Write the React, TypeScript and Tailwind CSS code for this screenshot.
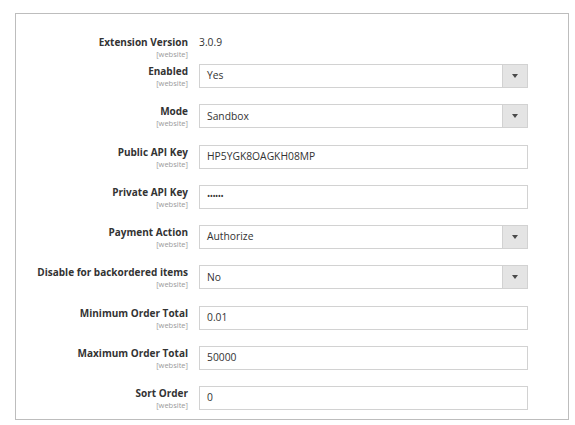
import React from 'react';

type Field = {
  label: string;
  value: string;
  kind: 'select' | 'text';
};

const fields: Field[] = [
  { label: 'Enabled', value: 'Yes', kind: 'select' },
  { label: 'Mode', value: 'Sandbox', kind: 'select' },
  { label: 'Public API Key', value: 'HP5YGK8OAGKH08MP', kind: 'text' },
  { label: 'Private API Key', value: '••••••', kind: 'text' },
  { label: 'Payment Action', value: 'Authorize', kind: 'select' },
  { label: 'Disable for backordered items', value: 'No', kind: 'select' },
  { label: 'Minimum Order Total', value: '0.01', kind: 'text' },
  { label: 'Maximum Order Total', value: '50000', kind: 'text' },
  { label: 'Sort Order', value: '0', kind: 'text' },
];

function Label({ text }: { text: string }) {
  return (
    <div className="w-[183px] shrink-0 pr-[11px] text-right whitespace-nowrap">
      <div className="text-[10px] leading-[14px] font-bold text-[#333]">{text}</div>
      <div className="text-[7.5px] leading-[10px] text-[#9a9a9a]">[website]</div>
    </div>
  );
}

function Control({ field }: { field: Field }) {
  return (
    <div className="flex h-[24px] w-[329px] items-stretch border border-[#d2d2d2] bg-white">
      <div className="flex flex-1 items-center pl-[7px] text-[10.3px] text-[#333]">
        {field.label === 'Private API Key' ? (
          <span className="text-[8.5px] tracking-[-0.5px]">{field.value}</span>
        ) : (
          field.value
        )}
      </div>
      {field.kind === 'select' && (
        <div className="flex w-[25px] items-center justify-center border-l border-[#d2d2d2] bg-[#e4e4e4]">
          <svg width="6" height="4" viewBox="0 0 6 4">
            <path d="M0 0h6L3 4z" fill="#4a4a4a" />
          </svg>
        </div>
      )}
    </div>
  );
}

export default function App() {
  return (
    <div className="h-[425px] w-[575px] bg-white pl-[15px] pt-[13px]" style={{ fontFamily: '"Open Sans", sans-serif' }}>
      <div className="h-[407px] w-[554px] border border-[#bdbdbd] pt-[21px]">
        {/* Extension version */}
        <div className="flex items-start">
          <Label text="Extension Version" />
          <div className="text-[10.3px] leading-[14px] text-[#333]">3.0.9</div>
        </div>

        <div className="mt-[5px] flex flex-col gap-[16.25px]">
          {fields.map((f) => (
            <div key={f.label} className="flex items-start">
              <Label text={f.label} />
              <Control field={f} />
            </div>
          ))}
        </div>
      </div>
    </div>
  );
}
